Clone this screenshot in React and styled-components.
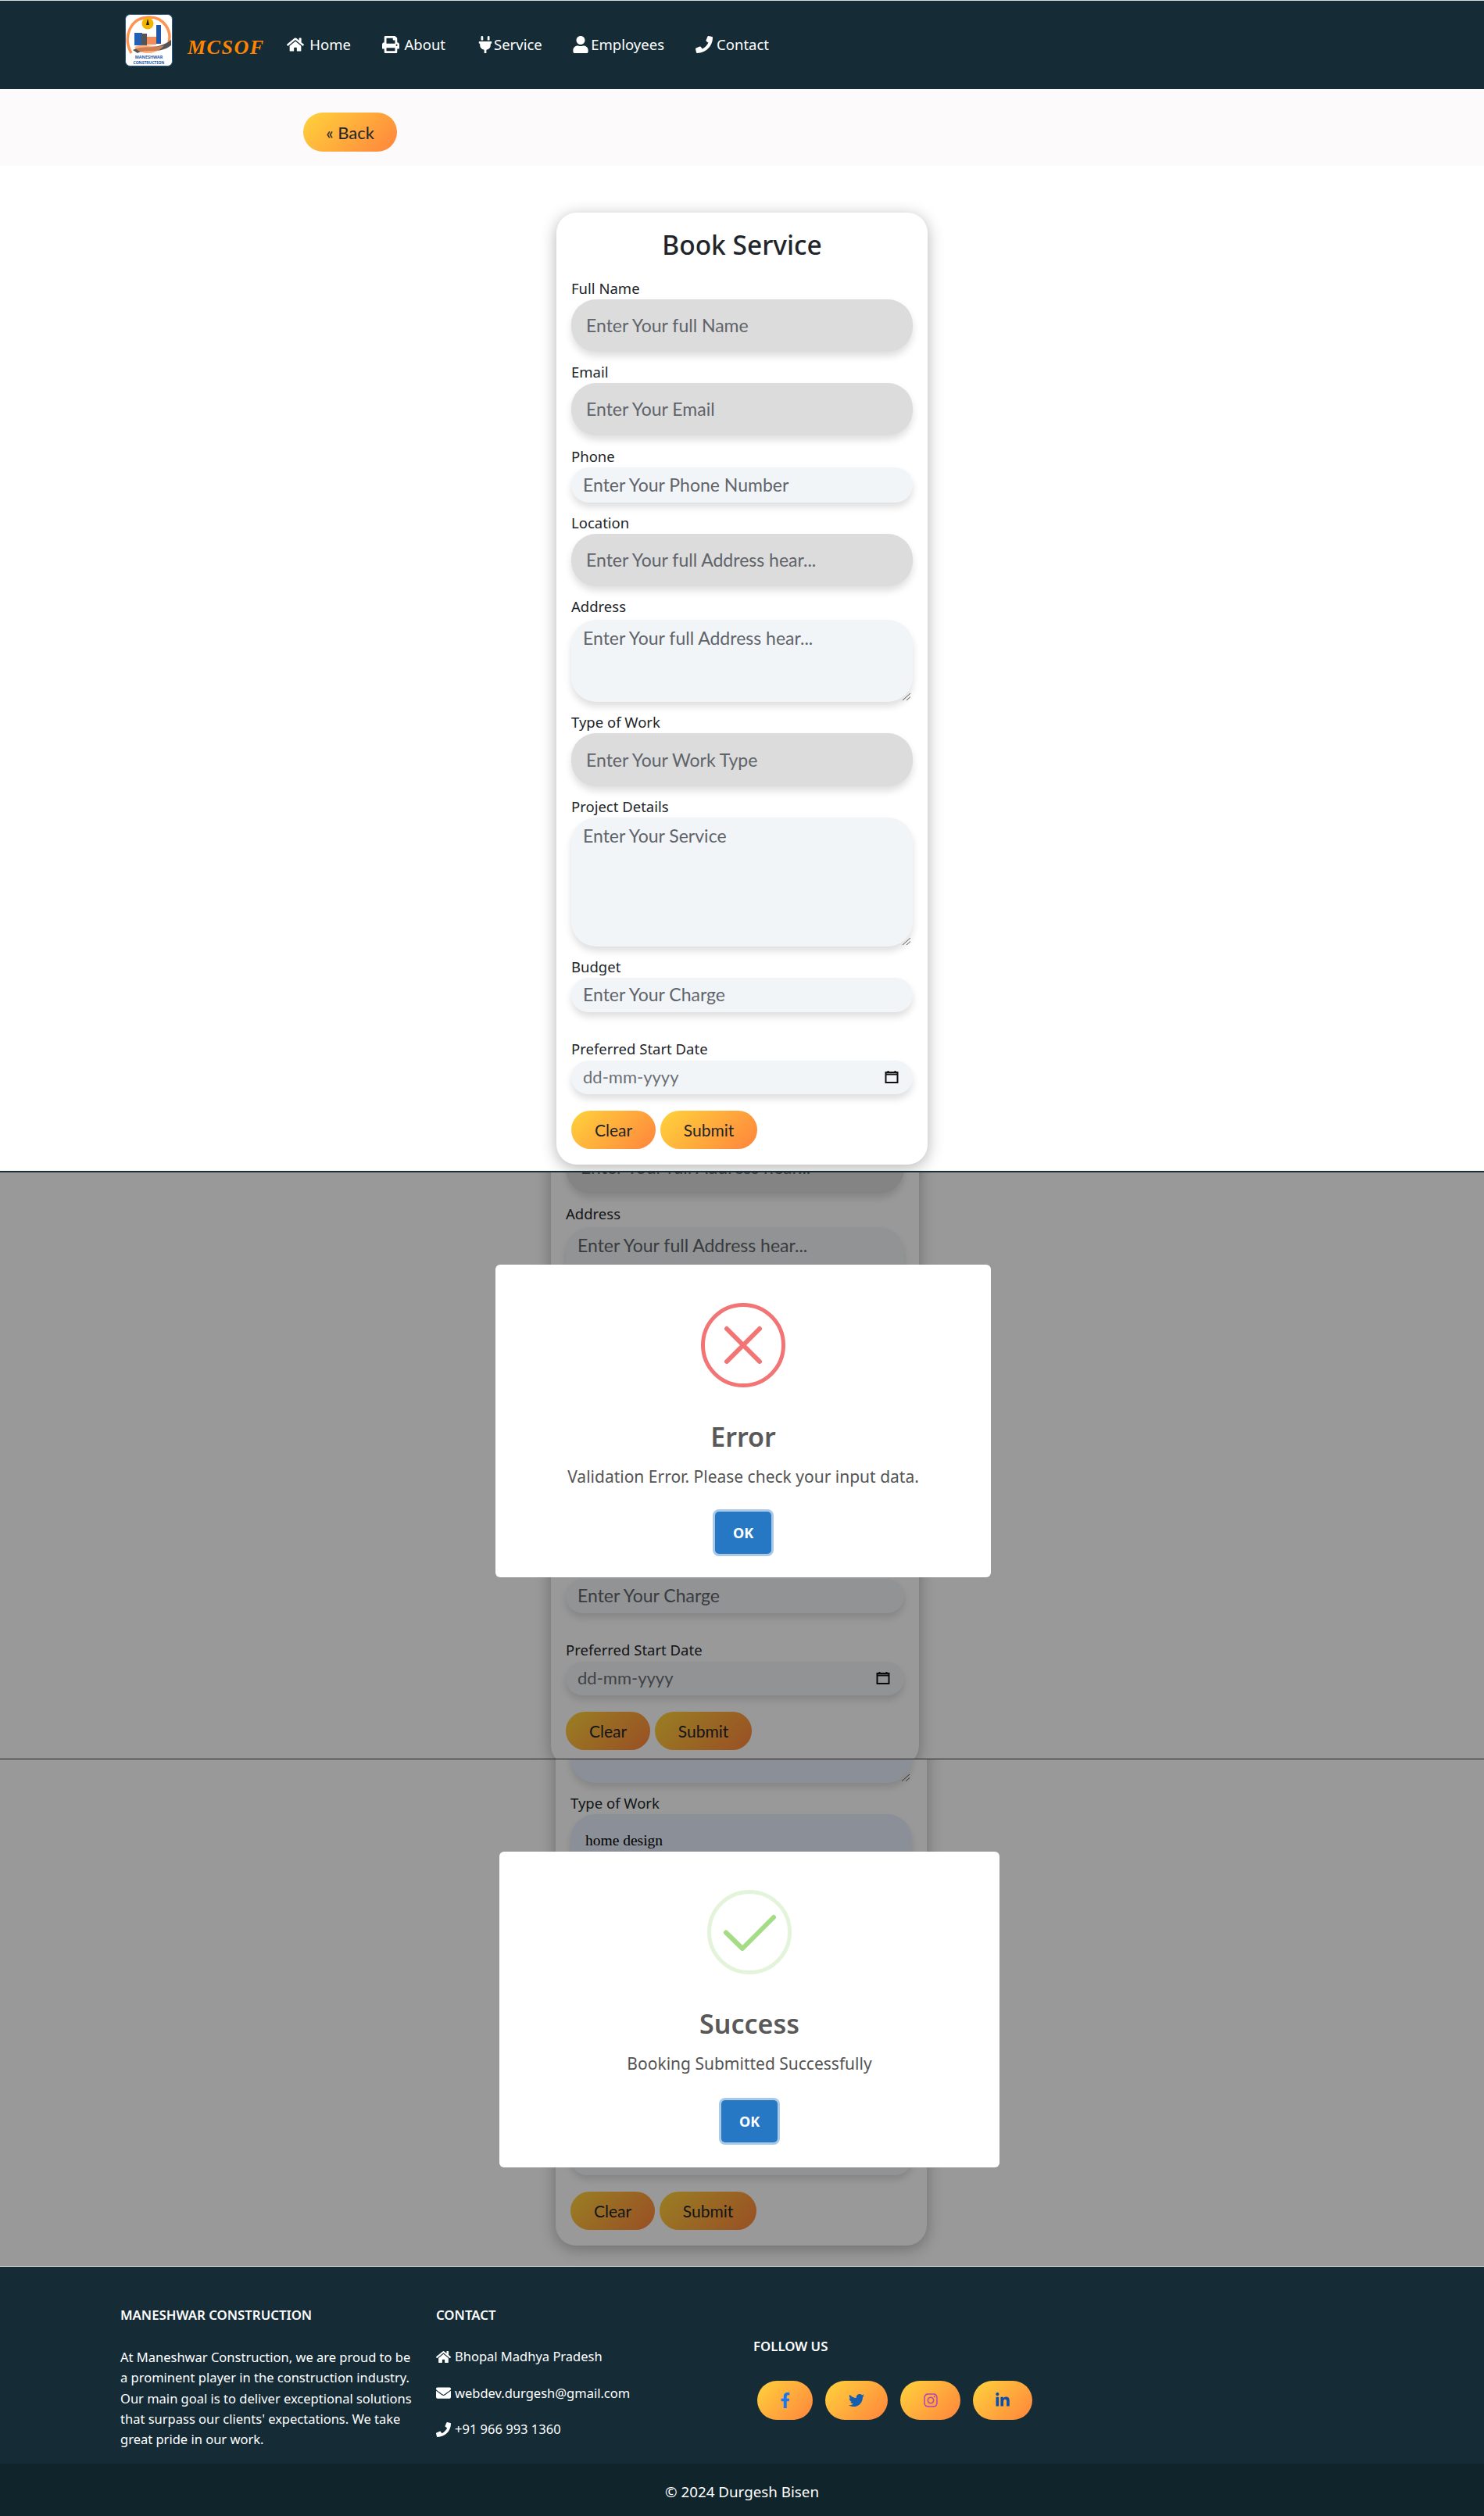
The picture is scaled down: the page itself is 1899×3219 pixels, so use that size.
import React from "react";
import styled, { createGlobalStyle } from "styled-components";
import { FaHome, FaPrint, FaPlug, FaUser, FaPhone, FaEnvelope, FaFacebookF, FaTwitter, FaInstagram, FaLinkedinIn } from "react-icons/fa";

const UI = '"Noto Sans", "Open Sans", sans-serif';
const SOFT = 'Lato, "Noto Sans", sans-serif';
const NAVY = "#152c37";
const GRADIENT = "linear-gradient(135deg, #ffcb3c 10%, #ff8c3c 90%)";

const Global = createGlobalStyle`
  html, body { margin: 0; padding: 0; background: #fff; }
  body { font-family: ${UI}; color: #212529; }
  * { box-sizing: border-box; }
`;

const Page = styled.div`
  width: 1899px;
  height: 3219px;
  overflow: hidden;
  display: flex;
  flex-direction: column;
`;

const Header = styled.header`
  height: 114px;
  flex: none;
  background: ${NAVY};
  border-top: 1px solid #d8dcdd;
  display: flex;
  align-items: flex-start;
  padding: 17px 0 0 160px;
`;

const LogoBox = styled.div`
  width: 61px;
  height: 67px;
  flex: none;
  svg { display: block; width: 100%; height: 100%; }
`;

const Brand = styled.div`
  width: 146px;
  padding: 25px 0 0 19px;
  flex: none;
  font: italic 700 26px/36px "Liberation Serif", serif;
  color: #ff8400;
  letter-spacing: 1.5px;
`;

const Nav = styled.nav`
  display: grid;
  grid-template-columns: 82px 81px 82px 118px 94px;
  gap: 40px;
  padding-top: 25px;
`;

const NavLink = styled.a`
  display: flex;
  align-items: center;
  justify-content: space-between;
  color: #fff;
  font-size: 18.5px;
  line-height: 28px;
  white-space: nowrap;
  svg { font-size: 22px; flex: none; }
`;

const BackBar = styled.div`
  height: 98px;
  flex: none;
  background: #fcfafb;
  padding: 30px 0 0 388px;
`;

const PillButton = styled.button`
  border: 0;
  border-radius: 26px;
  height: ${(p) => p.$h || 49}px;
  width: ${(p) => p.$w}px;
  background: ${GRADIENT};
  color: #212529;
  font: 400 ${(p) => p.$size || 21}px ${SOFT};
  padding: 0;
`;

const FormStage = styled.section`
  flex: none;
  height: 1288px;
  padding-top: 60px;
  border-bottom: 2px solid #1c2f38;
  display: flex;
  justify-content: center;
  align-items: flex-start;
`;

const ModalStage = styled.section`
  flex: none;
  position: relative;
  overflow: hidden;
  height: ${(p) => p.$height}px;
  display: flex;
  justify-content: center;
  align-items: flex-start;
  padding-right: ${(p) => p.$shift}px;
  border-top: ${(p) => p.$line};
  border-bottom: ${(p) => p.$bottom || "none"};
`;

const Card = styled.form`
  width: ${(p) => p.$width || 475}px;
  flex: none;
  margin-top: ${(p) => p.$top || 0}px;
  background: #fff;
  border-radius: 26px;
  box-shadow: 0 4px 20px rgba(0, 0, 0, 0.3);
  padding: 20px 19px 20px;
  display: flex;
  flex-direction: column;
  gap: 15px;
`;

const Title = styled.h2`
  margin: 0 0 9px;
  font-size: 33.5px;
  line-height: 42px;
  font-weight: 500;
  text-align: center;
  color: #212529;
`;

const Field = styled.div`
  display: flex;
  flex-direction: column;
  margin-top: ${(p) => p.$extra || 0}px;
`;

const Label = styled.label`
  font-size: 18.5px;
  line-height: 22px;
  height: 22px;
  margin-bottom: ${(p) => p.$gap || 3}px;
  color: #212529;
`;

const Control = styled.div`
  position: relative;
  height: ${(p) => p.$h}px;
  flex: none;
  display: flex;
  align-items: ${(p) => (p.$multi ? "flex-start" : "center")};
  justify-content: space-between;
  padding: ${(p) => (p.$multi ? "9px 15px 0" : p.$tone === "light" ? "0 15px 2px" : "0 19px 1px")};
  border-radius: ${(p) => (p.$tone === "light" && !p.$multi ? 23 : 32)}px;
  background: ${(p) => (p.$tone === "grey" ? "#dcdcdc" : p.$tone === "auto" ? "#e8f0fe" : "#f2f5f8")};
  box-shadow: 0 6px 10px rgba(0, 0, 0, 0.13);
  font-family: ${(p) => (p.$tone === "auto" ? '"Liberation Serif", serif' : SOFT)};
  font-size: ${(p) => (p.$tone === "auto" ? "19.5px" : p.$date ? "22px" : "23px")};
  line-height: 28px;
  color: ${(p) => (p.$tone === "auto" ? "#000" : p.$date ? "#6a6f75" : "#5f646a")};
`;

const Grip = styled.svg`
  position: absolute;
  right: 2px;
  bottom: 1px;
  width: 12px;
  height: 12px;
`;

const CalendarIcon = styled.svg`
  width: 18px;
  height: 18px;
  flex: none;
  margin-right: 3px;
`;

const Actions = styled.div`
  display: flex;
  gap: 6px;
  margin-top: 6px;
`;

const Overlay = styled.div`
  position: absolute;
  inset: 0;
  background: rgba(0, 0, 0, 0.4);
  display: flex;
  justify-content: center;
  align-items: flex-start;
  padding-top: ${(p) => p.$top}px;
  padding-left: ${(p) => p.$left}px;
`;

const Modal = styled.div`
  width: ${(p) => p.$w}px;
  height: ${(p) => p.$h}px;
  background: #fff;
  border-radius: 6px;
  padding-top: 49px;
  display: flex;
  flex-direction: column;
  align-items: center;
`;

const StatusIcon = styled.svg`
  width: 108px;
  height: 108px;
  flex: none;
`;

const ModalTitle = styled.h3`
  margin: 43px 0 0;
  font-size: 34px;
  line-height: 40px;
  font-weight: 600;
  color: #595959;
`;

const ModalText = styled.p`
  margin: 19px 0 0;
  font-size: 21px;
  line-height: 24px;
  color: #545454;
`;

const OkButton = styled.button`
  margin-top: ${(p) => p.$gap}px;
  width: 72px;
  height: 54px;
  border: 0;
  border-radius: 5px;
  background: #2778c4;
  box-shadow: 0 0 0 3px rgba(39, 120, 196, 0.4);
  color: #fff;
  font: 700 18px ${UI};
`;

const Footer = styled.footer`
  flex: none;
  height: 252px;
  background: ${NAVY};
  display: grid;
  grid-template-columns: 404px 406px 1fr;
  padding: 50px 0 0 154px;
`;

const FooterHeading = styled.h4`
  margin: 0;
  font-size: 16.8px;
  line-height: 24px;
  font-weight: 600;
  color: #fff;
  text-transform: uppercase;
`;

const About = styled.p`
  margin: 29px 0 0;
  width: 380px;
  font-size: 16.5px;
  line-height: 26.3px;
  color: #fff;
`;

const ContactList = styled.ul`
  list-style: none;
  margin: 28px 0 0;
  padding: 0;
  display: flex;
  flex-direction: column;
  gap: 20.5px;
`;

const ContactItem = styled.li`
  display: flex;
  align-items: center;
  gap: 5px;
  font-size: 16.5px;
  line-height: 26px;
  color: #fff;
  svg { flex: none; font-size: 19px; }
`;

const FollowColumn = styled.div`
  padding-top: 40px;
`;

const SocialRow = styled.div`
  display: flex;
  gap: 16px;
  margin: 32px 0 0 5px;
`;

const Social = styled.a`
  width: ${(p) => p.$w}px;
  height: 50px;
  border-radius: 25px;
  background: ${GRADIENT};
  color: ${(p) => p.$color};
  display: flex;
  align-items: center;
  justify-content: center;
  font-size: 20px;
`;

const Copyright = styled.div`
  flex: 1;
  background: #10242b;
  color: #fff;
  font-size: 18.8px;
  text-align: center;
  padding: 23px 0 0 0;
  line-height: 26px;
`;

function Logo() {
  return (
    <svg viewBox="0 0 61 67">
      <rect x="0.5" y="0.5" width="60" height="66" rx="6" fill="#fff" stroke="#2a5a86" />
      <path d="M8 50 C-3 30 6 5 30 4 C50 3 60 22 56 36" fill="none" stroke="#ff9350" strokeWidth="3.5" />
      <circle cx="29" cy="12" r="7.5" fill="#f5b400" />
      <path d="M29 6 l2 8 h-4z" fill="#222" />
      <rect x="40" y="14" width="6" height="24" fill="#1f57a8" />
      <rect x="12" y="24" width="10" height="16" fill="#2160b4" />
      <rect x="21" y="25" width="7" height="15" fill="#555" />
      <rect x="28" y="29" width="12" height="10" fill="#f58a5a" />
      <path d="M10 46 C24 38 40 48 59 33 L59 40 C44 52 26 44 16 50z" fill="#555" />
      <path d="M12 42 C24 36 40 44 50 40 C42 52 20 54 12 42z" fill="#ff9350" opacity=".7" />
      <text x="30.5" y="57" textAnchor="middle" fontSize="5.4" fontWeight="700" fill="#1f57a8" fontFamily="Noto Sans, sans-serif">MANESHWAR</text>
      <text x="30.5" y="63.5" textAnchor="middle" fontSize="5" fontWeight="700" fill="#1f57a8" fontFamily="Noto Sans, sans-serif">CONSTRUCTION</text>
    </svg>
  );
}

function TextBox({ tone = "light", h, multi, children, date }) {
  return (
    <Control $tone={tone} $h={h} $multi={multi} $date={date}>
      {children}
      {date && (
        <CalendarIcon viewBox="0 0 18 18">
          <path d="M1.5 5.5 h15 M1.5 3 h15 v13 h-15z M4.5 1 v2 M13.5 1 v2" fill="none" stroke="#111" strokeWidth="2" />
        </CalendarIcon>
      )}
      {multi && (
        <Grip viewBox="0 0 12 12">
          <path d="M1 11 L11 2 M6 11 L11 6.5" stroke="#555" strokeWidth="1" />
        </Grip>
      )}
    </Control>
  );
}

function BookingForm({ width, top, detailsHeight = 165, filled }) {
  return (
    <Card $width={width} $top={top}>
      <Title>Book Service</Title>
      <Field><Label>Full Name</Label><TextBox tone="grey" h={67}>Enter Your full Name</TextBox></Field>
      <Field><Label>Email</Label><TextBox tone="grey" h={67}>Enter Your Email</TextBox></Field>
      <Field $extra={1}><Label>Phone</Label><TextBox h={45}>Enter Your Phone Number</TextBox></Field>
      <Field><Label>Location</Label><TextBox tone="grey" h={67}>Enter Your full Address hear...</TextBox></Field>
      <Field><Label $gap={6}>Address</Label><TextBox tone={filled ? "auto" : "light"} h={105} multi>{filled ? "" : "Enter Your full Address hear..."}</TextBox></Field>
      <Field><Label>Type of Work</Label><TextBox tone={filled ? "auto" : "grey"} h={68}>{filled ? "home design" : "Enter Your Work Type"}</TextBox></Field>
      <Field><Label>Project Details</Label><TextBox h={detailsHeight} multi>Enter Your Service</TextBox></Field>
      <Field><Label>Budget</Label><TextBox h={44}>Enter Your Charge</TextBox></Field>
      <Field $extra={21}><Label $gap={4}>Preferred Start Date</Label><TextBox h={43} date>dd-mm-yyyy</TextBox></Field>
      <Actions>
        <PillButton type="button" $w={108}>Clear</PillButton>
        <PillButton type="button" $w={124}>Submit</PillButton>
      </Actions>
    </Card>
  );
}

function ErrorIcon() {
  return (
    <StatusIcon viewBox="0 0 108 108">
      <circle cx="54" cy="54" r="51.5" fill="none" stroke="#f27474" strokeWidth="5" />
      <path d="M33 33 L75 75 M75 33 L33 75" stroke="#f27474" strokeWidth="6" strokeLinecap="round" />
    </StatusIcon>
  );
}

function SuccessIcon() {
  return (
    <StatusIcon viewBox="0 0 108 108">
      <circle cx="54" cy="54" r="51.5" fill="none" stroke="rgba(165,220,134,.3)" strokeWidth="5" />
      <path d="M24 54.5 L45 75 L85 35" fill="none" stroke="#a5dc86" strokeWidth="6" strokeLinecap="round" strokeLinejoin="round" />
    </StatusIcon>
  );
}

export default function App() {
  return (
    <Page>
      <Global />
      <Header>
        <LogoBox><Logo /></LogoBox>
        <Brand>MCSOF</Brand>
        <Nav>
          <NavLink><FaHome />Home</NavLink>
          <NavLink><FaPrint />About</NavLink>
          <NavLink><FaPlug />Service</NavLink>
          <NavLink><FaUser />Employees</NavLink>
          <NavLink><FaPhone />Contact</NavLink>
        </Nav>
      </Header>
      <BackBar><PillButton type="button" $w={120} $h={50} $size={22}>« Back</PillButton></BackBar>

      <FormStage><BookingForm /></FormStage>

      <ModalStage $height={750} $shift={18} $line="none">
        <BookingForm width={471} top={-451} detailsHeight={157} />
        <Overlay $top={118} $left={3}>
          <Modal $w={634} $h={400}>
            <ErrorIcon />
            <ModalTitle>Error</ModalTitle>
            <ModalText>Validation Error. Please check your input data.</ModalText>
            <OkButton type="button" $gap={33}>OK</OkButton>
          </Modal>
        </Overlay>
      </ModalStage>

      <ModalStage $height={650} $shift={2} $line="1px solid #222" $bottom="1px solid #fff">
        <BookingForm top={-596} filled />
        <Overlay $top={118} $left={19}>
          <Modal $w={640} $h={404}>
            <SuccessIcon />
            <ModalTitle>Success</ModalTitle>
            <ModalText>Booking Submitted Successfully</ModalText>
            <OkButton type="button" $gap={35}>OK</OkButton>
          </Modal>
        </Overlay>
      </ModalStage>

      <Footer>
        <div>
          <FooterHeading>Maneshwar Construction</FooterHeading>
          <About>At Maneshwar Construction, we are proud to be a prominent player in the construction industry. Our main goal is to deliver exceptional solutions that surpass our clients' expectations. We take great pride in our work.</About>
        </div>
        <div>
          <FooterHeading>Contact</FooterHeading>
          <ContactList>
            <ContactItem><FaHome />Bhopal Madhya Pradesh</ContactItem>
            <ContactItem><FaEnvelope />webdev.durgesh@gmail.com</ContactItem>
            <ContactItem><FaPhone />+91 966 993 1360</ContactItem>
          </ContactList>
        </div>
        <FollowColumn>
          <FooterHeading>Follow Us</FooterHeading>
          <SocialRow>
            <Social $w={71} $color="#1877f2"><FaFacebookF /></Social>
            <Social $w={80} $color="#155fb0"><FaTwitter /></Social>
            <Social $w={77} $color="#b545b5"><FaInstagram /></Social>
            <Social $w={76} $color="#0a4fa8"><FaLinkedinIn /></Social>
          </SocialRow>
        </FollowColumn>
      </Footer>
      <Copyright>© 2024 Durgesh Bisen</Copyright>
    </Page>
  );
}
